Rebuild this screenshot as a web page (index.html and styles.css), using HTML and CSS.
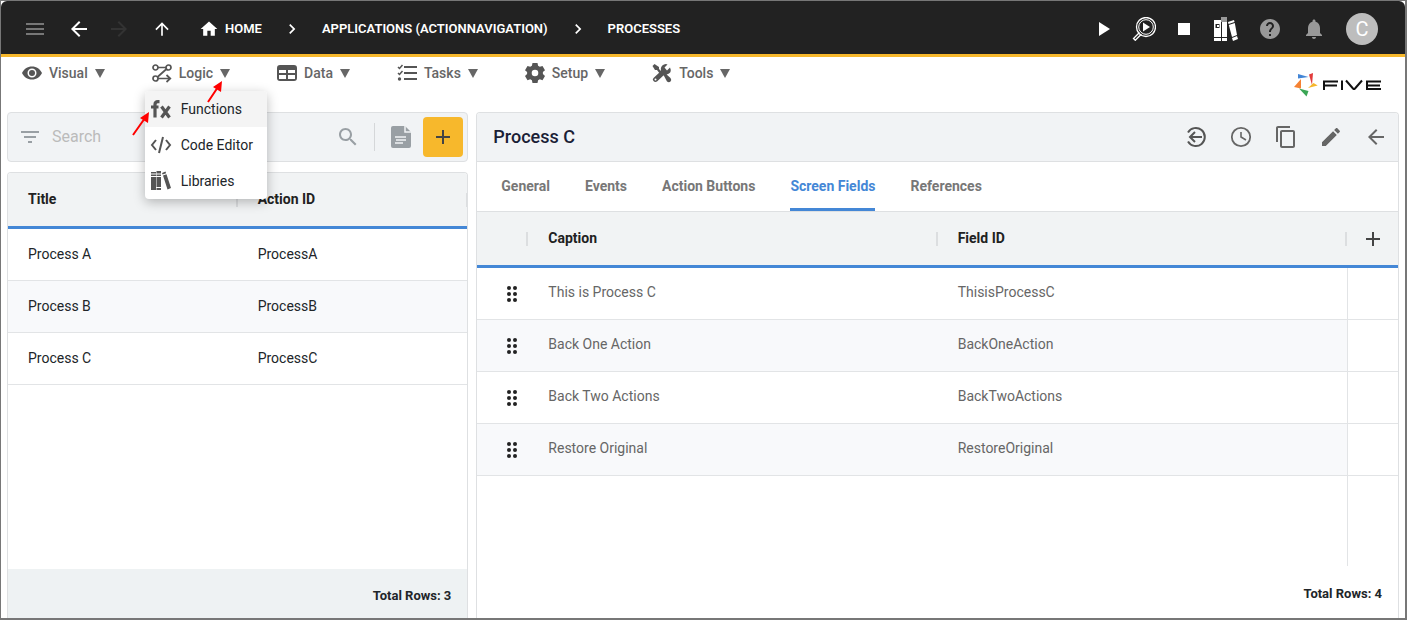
FILE: index.html
```html
<!DOCTYPE html>
<html lang="en">
<head>
<meta charset="utf-8">
<title>Processes</title>
<link rel="stylesheet" href="styles.css">
</head>
<body>
<svg class="sprite" aria-hidden="true">
  <symbol id="back" viewBox="0 0 24 24"><path d="M20 11H7.830l5.590-5.590L12 4l-8 8 8 8 1.410-1.410L7.830 13H20v-2z"/></symbol>
  <symbol id="up" viewBox="0 0 24 24"><path d="M4 12l1.410 1.410L11 7.830V20h2V7.830l5.580 5.590L20 12l-8-8-8 8z"/></symbol>
  <symbol id="chevron" viewBox="0 0 24 24"><path d="M10 6L8.590 7.410 13.170 12l-4.580 4.590L10 18l6-6z"/></symbol>
  <symbol id="plus" viewBox="0 0 24 24"><path d="M19 13h-6v6h-2v-6H5v-2h6V5h2v6h6v2z"/></symbol>
  <symbol id="books" viewBox="0 0 22 22"><path d="M1 2h5v1.500H1zM1 4.500h5V6H1zM1 7h5v13H1zM6.500 1h4.500v2.500H6.500zM6.500 4.500H11V6H6.500zM6.500 7H11v10H6.500zM6.500 18H11v2H6.500zM12 3l3.500-1.500.6 1.700-3.500 1.300zM13 5.500l3.500-1.300L21 18l-3.500 1.500z"/></symbol>
  <symbol id="grip" viewBox="0 0 12 18"><circle cx="3" cy="3" r="2"/><circle cx="9" cy="3" r="2"/><circle cx="3" cy="9" r="2"/><circle cx="9" cy="9" r="2"/><circle cx="3" cy="15" r="2"/><circle cx="9" cy="15" r="2"/></symbol>
</svg>
<div class="app">
  <header class="topbar">
    <button class="icon-btn hamburger" aria-label="Menu"><svg class="i20" viewBox="0 0 20 20"><path d="M1 4h18v2H1zM1 9h18v2H1zM1 14h18v2H1z"/></svg></button>
    <button class="icon-btn nav-back" aria-label="Back"><svg class="i24"><use href="#back"/></svg></button>
    <button class="icon-btn nav-forward" aria-label="Forward" disabled><svg class="i24"><use href="#back"/></svg></button>
    <button class="icon-btn nav-up" aria-label="Up"><svg class="i20"><use href="#up"/></svg></button>
    <nav class="crumbs" aria-label="Breadcrumb">
      <a href="#home"><svg class="i20" viewBox="0 0 24 24"><path d="M10 20v-6h4v6h5v-8h3L12 3 2 12h3v8z"/></svg>HOME</a>
      <svg class="i20"><use href="#chevron"/></svg>
      <a href="#app">APPLICATIONS (ACTIONNAVIGATION)</a>
      <svg class="i20"><use href="#chevron"/></svg>
      <a href="#processes">PROCESSES</a>
    </nav>
    <div class="top-actions">
      <div class="run-actions">
        <button class="icon-btn" aria-label="Run"><svg class="i24" viewBox="0 0 24 24"><path d="M7 5v14l11-7z"/></svg></button>
        <button class="icon-btn" aria-label="Inspect"><svg class="i24" viewBox="0 0 24 24"><g fill="none" stroke="#fff"><circle cx="14" cy="10" r="9.500" stroke-width="1.300"/><circle cx="14" cy="10" r="7.300" stroke-width="1"/><path d="M7.500 15.500l-6 6 1.800 1.800 6-6" stroke-width="1.300"/></g><path d="M11 5.500v9l7-4.500z"/></svg></button>
        <button class="icon-btn" aria-label="Stop"><svg class="i24" viewBox="0 0 24 24"><path d="M6 6h12v12H6z"/></svg></button>
      </div>
      <button class="icon-btn" aria-label="Libraries"><svg class="i24" viewBox="0 0 24 24"><path d="M0 3h7v17H0zM0 21h7v3H0zM8 5h5v15H8zM8 21h5v3H8zM14 5l6-2 .5 2-6 2zM14.800 8l6-2L23 18l-5 2zM18 21l5-2 1 3-5 2z"/><path d="M1.500 7h4v4h-4z" fill="#222"/><path d="M3 8h2v2H3z"/><path d="M7 0h6v5H7z" fill="#999"/></svg></button>
      <button class="icon-btn dim" aria-label="Help"><svg class="i24" viewBox="0 0 24 24"><path d="M12 2C6.480 2 2 6.480 2 12s4.480 10 10 10 10-4.480 10-10S17.520 2 12 2zm1 17h-2v-2h2v2zm2.070-7.750l-.9.920C13.450 12.900 13 13.500 13 15h-2v-.5c0-1.100.450-2.100 1.170-2.830l1.240-1.260c.370-.360.590-.860.590-1.410 0-1.100-.9-2-2-2s-2 .9-2 2H8c0-2.210 1.790-4 4-4s4 1.790 4 4c0 .880-.360 1.680-.930 2.250z"/></svg></button>
      <button class="icon-btn dim" aria-label="Notifications"><svg class="i24" viewBox="0 0 24 24"><path d="M12 22c1.100 0 2-.9 2-2h-4c0 1.100.890 2 2 2zm6-6v-5c0-3.070-1.640-5.640-4.500-6.320V4c0-.830-.670-1.500-1.500-1.500s-1.500.670-1.500 1.500v.680C7.630 5.360 6 7.920 6 11v5l-2 2v1h16v-1l-2-2z"/></svg></button>
      <button class="avatar" aria-label="Account">C</button>
    </div>
  </header>

  <div class="menubar">
    <ul class="menus">
      <li><button class="menu-btn"><svg class="i20" viewBox="0 0 20 20"><path fill-rule="evenodd" d="M10 3.500C5.500 3.500 1.600 6.200 0 10c1.600 3.800 5.500 6.500 10 6.500s8.400-2.700 10-6.500c-1.600-3.800-5.500-6.500-10-6.500zm0 11a4.500 4.500 0 1 1 0-9 4.500 4.500 0 0 1 0 9z"/><circle cx="10" cy="10" r="3"/></svg>Visual<span class="caret"></span></button></li>
      <li><button class="menu-btn" aria-expanded="true"><svg class="i20" viewBox="0 0 20 20"><g fill="none" stroke="#555" stroke-width="1.700"><circle cx="3.500" cy="4.500" r="2.500"/><circle cx="16.500" cy="4.500" r="2.500"/><circle cx="3.500" cy="15.500" r="2.500"/><path d="M6 4.500h8M14.500 6L5.500 14M6 15.500h12M14.500 12l3.800 3.500-3.800 3.500"/></g></svg>Logic<span class="caret"></span></button>
        <div class="dropdown" role="menu">
          <button class="drop-item active" role="menuitem"><svg class="i22" viewBox="0 0 22 22"><path fill="none" stroke="#555" stroke-width="3.200" d="M9.500 3.600H8Q5 3.600 5 6.500V19.500M1 9h7.500M11.500 8.500l8 11M19.500 8.500l-8 11"/></svg>Functions</button>
          <button class="drop-item" role="menuitem"><svg class="i22" viewBox="0 0 22 22"><path fill="none" stroke="#555" stroke-width="2" d="M6 6l-4 5 4 5M16 6l4 5-4 5M13 3L9 19"/></svg>Code Editor</button>
          <button class="drop-item" role="menuitem"><svg class="i22"><use href="#books"/></svg>Libraries</button>
        </div>
        <svg class="pointers" viewBox="0 0 96 60" aria-hidden="true"><path d="M76 21L86 6M1 54L13 37" stroke="#f00" stroke-width="2"/><path d="M90 0l-1 11-8-5zM17 31l-1 11-8-5z" fill="#f00"/></svg>
      </li>
      <li><button class="menu-btn"><svg class="i20" viewBox="0 0 20 20"><path fill-rule="evenodd" d="M3 2h14q3 0 3 3v10q0 3-3 3H3q-3 0-3-3V5q0-3 3-3zM2 7v3h7V7zm9 0v3h7V7zm-9 5v4h7v-4zm9 0v4h7v-4z"/></svg>Data<span class="caret"></span></button></li>
      <li><button class="menu-btn"><svg class="i20" viewBox="0 0 20 20"><path d="M7 3h13v2H7zM7 9h13v2H7zM7 15h13v2H7z"/><circle cx="2.500" cy="16" r="1.700"/><path d="M1 4l1.500 1.500L5.500 2M1 10l1.500 1.500L5.500 8" fill="none" stroke="#555" stroke-width="1.500"/></svg>Tasks<span class="caret"></span></button></li>
      <li><button class="menu-btn"><svg class="i20" viewBox="0 0 20 20"><path fill-rule="evenodd" d="M7.500 0h5l.6 2.800 1.700 1 2.700-.9 2.500 4.300-2.100 1.900v1.900l2.100 1.900-2.500 4.300-2.700-.9-1.700 1-.6 2.700h-5l-.6-2.700-1.700-1-2.700.9L0 12.900 2.100 11V9.100L0 7.200l2.500-4.300 2.700.9 1.700-1zM10 6.700a3.300 3.300 0 1 0 0 6.600 3.300 3.300 0 0 0 0-6.600z"/></svg>Setup<span class="caret"></span></button></li>
      <li><button class="menu-btn"><svg class="i20" viewBox="0 0 20 20"><path d="M.5 3l2-2L7 4v2l3 3-2 2-3-4H3zM11.500 12l2-1.500 5 4.500q1.500 2 0 3.500t-3.500 0zM1.500 15l7.500-7q-1-5 3-6.500 2-1 3.500 0l-3 3 2.500 3 3-3q2 4-1 6-2 1.500-4.500 1l-7.500 7q-2 1-3.500-.5t0-3z"/><circle cx="3.500" cy="16.500" r="1" fill="#fff"/></svg>Tools<span class="caret"></span></button></li>
    </ul>
    <svg class="brand" viewBox="0 0 88 26" role="img" aria-label="FIVE"><path fill="#4285d6" d="M4 2l10.500 3L4 6.500z"/><path fill="#e23b3b" d="M15 2.500l4-1.500-1 12z"/><path fill="#f5b62b" d="M14 16l5.500-5 4.200 2.500z"/><path fill="#3aa655" d="M5 16.500l9.500 2.500-2 5.500z"/><path fill="#f58233" d="M7 7v9.500L0 15z"/><g fill="none" stroke="#111" stroke-width="2"><path d="M30 18V9.500h14M30 13.500h13M48 8.500V18M52 8.500l7 8q1 1 2 0l7-8M87 9.500H73V17h14M73 13.500h13"/></g></svg>
  </div>

  <main class="panes">
    <section class="list-pane">
      <div class="search">
        <svg class="i20 muted" viewBox="0 0 20 20"><path d="M1 4h18v2H1zM4 9h12v2H4zM8 14h4v2H8z"/></svg>
        <input type="text" placeholder="Search" aria-label="Search">
        <button class="icon-btn muted" aria-label="Find"><svg class="i24" viewBox="0 0 24 24"><path d="M15.500 14h-.790l-.280-.270C15.410 12.590 16 11.110 16 9.500 16 5.910 13.090 3 9.500 3S3 5.910 3 9.500 5.910 16 9.500 16c1.610 0 3.090-.590 4.230-1.570l.270.280v.790l5 4.990L20.490 19l-4.990-5zm-6 0C7.010 14 5 11.990 5 9.500S7.010 5 9.500 5 14 7.010 14 9.500 11.990 14 9.500 14z"/></svg></button>
        <span class="divider"></span>
        <button class="icon-btn muted" aria-label="Report"><svg class="i24" viewBox="0 0 24 24"><path d="M4 1h12l6 6v14q0 2-2 2H4q-2 0-2-2V3q0-2 2-2z"/><path d="M16 1v6h6" fill="none" stroke="#f1f3f5" stroke-width="1.500"/><path d="M6 12h11M7 15h10M6 18h8" stroke="#f1f3f5" stroke-width="1.300"/></svg></button>
        <button class="add" aria-label="Add"><svg class="i24"><use href="#plus"/></svg></button>
      </div>
      <div class="card">
        <table class="grid list">
          <thead><tr><th>Title</th><th>Action ID</th></tr></thead>
          <tbody>
            <tr><td>Process A</td><td>ProcessA</td></tr>
            <tr><td>Process B</td><td>ProcessB</td></tr>
            <tr><td>Process C</td><td>ProcessC</td></tr>
          </tbody>
        </table>
        <footer class="total shaded">Total Rows: 3</footer>
      </div>
    </section>

    <section class="card detail">
      <header class="detail-head">
        <h1>Process C</h1>
        <button class="icon-btn" aria-label="Revert"><svg class="i24" viewBox="0 0 24 24"><path d="M4 7.500a9 9 0 1 1 0 9M18 12H6M11 7l-5 5 5 5" fill="none" stroke="#555" stroke-width="2"/></svg></button>
        <button class="icon-btn" aria-label="History"><svg class="i24" viewBox="0 0 24 24"><path d="M12 7v5l5 3" fill="none" stroke="#666" stroke-width="1.600"/><circle cx="12" cy="12" r="9.200" fill="none" stroke="#666" stroke-width="1.800"/></svg></button>
        <button class="icon-btn" aria-label="Copy"><svg class="i24" viewBox="0 0 24 24"><path d="M16 1H4c-1.100 0-2 .9-2 2v14h2V3h12V1zm3 4H8c-1.100 0-2 .9-2 2v14c0 1.100.9 2 2 2h11c1.100 0 2-.9 2-2V7c0-1.100-.9-2-2-2zm0 16H8V7h11v14z"/></svg></button>
        <button class="icon-btn" aria-label="Edit"><svg class="i24" viewBox="0 0 24 24"><path d="M3 17.250V21h3.750L17.810 9.940l-3.750-3.750L3 17.250zM20.710 7.040c.390-.390.390-1.020 0-1.410l-2.340-2.340c-.390-.390-1.020-.390-1.410 0l-1.830 1.830 3.750 3.750 1.830-1.830z"/></svg></button>
        <button class="icon-btn" aria-label="Close"><svg class="i24"><use href="#back"/></svg></button>
      </header>
      <nav class="tabs">
        <a href="#general">General</a><a href="#events">Events</a><a href="#buttons">Action Buttons</a><a class="current" href="#fields">Screen Fields</a><a href="#references">References</a>
      </nav>
      <div class="detail-body">
      <table class="grid fields">
        <colgroup><col class="c-grip"><col><col><col class="c-add"></colgroup>
        <thead><tr><th></th><th>Caption</th><th>Field ID</th><th><button class="icon-btn" aria-label="Add field"><svg class="i24"><use href="#plus"/></svg></button></th></tr></thead>
        <tbody>
          <tr><td><svg class="grip"><use href="#grip"/></svg></td><td>This is Process C</td><td>ThisisProcessC</td><td></td></tr>
          <tr><td><svg class="grip"><use href="#grip"/></svg></td><td>Back One Action</td><td>BackOneAction</td><td></td></tr>
          <tr><td><svg class="grip"><use href="#grip"/></svg></td><td>Back Two Actions</td><td>BackTwoActions</td><td></td></tr>
          <tr><td><svg class="grip"><use href="#grip"/></svg></td><td>Restore Original</td><td>RestoreOriginal</td><td></td></tr>
        </tbody>
      </table>
      <div class="rail"></div>
      </div>
      <footer class="total">Total Rows: 4</footer>
    </section>
  </main>
</div>
</body>
</html>
```
FILE: styles.css
```css
* { box-sizing: border-box; }
body { margin: 0; background: #fff; color: #212529; font: 14px/20px Roboto, sans-serif; }
button { border: 0; padding: 0; background: none; font: inherit; color: inherit; cursor: pointer; }
a { color: inherit; text-decoration: none; }
svg { display: block; flex: none; fill: currentColor; }
.sprite { position: absolute; width: 0; height: 0; }
.i20 { width: 20px; height: 20px; }
.i22 { width: 22px; height: 22px; }
.i24 { width: 24px; height: 24px; }
.icon-btn { display: flex; align-items: center; justify-content: center; flex: none; }

.app { display: flex; flex-direction: column; height: 100vh; border: solid #777; border-width: 1px 2px 2px 1px; overflow: hidden; }

.topbar { display: flex; align-items: center; height: 56px; flex: none; padding: 2px 27px 0 24px; background: #222; border-bottom: 3px solid #f7b82c; border-radius: 6px 6px 0 0; color: #fff; }
.hamburger { color: #777; }
.nav-back { margin-left: 22px; }
.nav-forward { margin-left: 16px; color: #333; }
.nav-forward svg { transform: rotate(180deg); }
.nav-up { margin-left: 21px; }
.crumbs { display: flex; align-items: center; gap: 20px; margin-left: 27px; font-size: 13px; font-weight: 600; }
.crumbs a { display: flex; align-items: center; gap: 6px; }
.top-actions { display: flex; align-items: center; gap: 20px; margin-left: auto; }
.run-actions { display: flex; gap: 16px; margin-right: -2px; }
.dim { color: #999; }
.avatar { width: 32px; height: 32px; border-radius: 50%; background: #bdbdbd; color: #fff; font-size: 20px; }

.menubar { display: flex; justify-content: space-between; height: 55px; flex: none; padding: 6px 23px 0 21px; }
.menus { display: flex; gap: 47px; margin: 0; padding: 0; list-style: none; }
.menus li { position: relative; }
.menu-btn { display: flex; align-items: center; gap: 7px; color: #666; font-weight: 500; }
.menu-btn svg { color: #555; }
.caret { border: solid transparent; border-width: 9px 5px 0; border-top-color: #666; }
.dropdown { position: absolute; z-index: 2; top: 28px; left: -7px; width: 122px; background: #fff; border-radius: 4px; box-shadow: 0 3px 12px #0004; overflow: hidden; }
.drop-item { display: flex; align-items: center; gap: 9px; width: 100%; height: 36px; padding-left: 5px; white-space: nowrap; }
.drop-item svg { color: #555; }
.drop-item.active { background: #f4f4f4; }
.pointers { position: absolute; z-index: 3; top: 18px; left: -20px; width: 96px; height: 60px; pointer-events: none; }
.brand { width: 88px; height: 26px; margin-top: 9px; }

.panes { display: grid; grid-template-columns: 1fr 2fr; gap: 8px; flex: 1; min-height: 0; padding: 0 6px; }
.list-pane { display: flex; flex-direction: column; gap: 10px; min-width: 0; min-height: 0; }
.search { display: flex; align-items: center; height: 50px; flex: none; padding: 0 4px 0 12px; background: #f1f3f5; border: 1px solid #dee0e2; border-radius: 4px; }
.search input { flex: 1; min-width: 0; margin-left: 12px; padding: 0; border: 0; outline: 0; background: none; font: 16px/20px Roboto, sans-serif; }
.search input::placeholder { color: #bbb; }
.muted { color: #999fa4; }
.divider { width: 1px; height: 28px; margin: 0 14px; background: #d5d7d9; }
.add { display: grid; place-items: center; width: 40px; height: 40px; margin-left: 10px; border-radius: 4px; background: #f7b82c; color: #444; }

.card { display: flex; flex-direction: column; flex: 1; min-width: 0; min-height: 0; border: 1px solid #dee0e2; border-bottom: 0; border-radius: 4px 4px 0 0; overflow: hidden; }
.grid { width: 100%; border-collapse: separate; border-spacing: 0; table-layout: fixed; }
.grid th { position: relative; height: 56px; padding: 0 20px 2px; background: #f1f3f4; border-bottom: 3px solid #4487d6; text-align: left; font-weight: 700; color: #212121; }
.grid th:not(:last-child)::after { content: ""; position: absolute; right: 0; top: 20px; width: 2px; height: 14px; background: #dcdee0; }
.list th:last-child::after { content: ""; position: absolute; right: 0; top: 20px; width: 1px; height: 14px; background: #dcdee0; }
.grid td { height: 52px; padding: 0 20px 2px; border-bottom: 1px solid #e2e4e6; }
.grid tbody tr:nth-child(even) { background: #f8f9fb; }
.total { margin-top: auto; padding: 18px 16px 14px; text-align: right; font-size: 13px; font-weight: 700; }
.total.shaded { padding: 17px 16px 12px; background: #eef2f3; }

.detail-head { display: flex; align-items: center; gap: 21px; height: 49px; flex: none; padding: 0 10px 0 16px; background: #f1f3f5; border-bottom: 1px solid #dee0e2; color: #666; }
.detail-head h1 { flex: 1; margin: 0; font-size: 18px; font-weight: 500; color: #1a2035; }
.tabs { display: flex; gap: 35px; height: 50px; flex: none; padding: 0 24px; border-bottom: 1px solid #dee0e2; color: #777; font-weight: 700; line-height: 49px; }
.tabs .current { color: #4487d6; box-shadow: inset 0 -3px #4487d6; }
.detail-body { display: flex; flex-direction: column; flex: 1; min-height: 0; }
.c-grip { width: 51px; }
.c-add { width: 51px; }
.fields td { padding-bottom: 4px; color: #666; }
.fields tbody td:first-child { padding: 0 0 0 29px; color: #222; }
.fields th:last-child { padding: 0 0 0 14px; color: #444; }
.fields td:last-child { background: #fff; border-left: 1px solid #e2e4e6; }
.grip { width: 12px; height: 18px; }
.rail { flex: 1; width: 51px; margin-left: auto; border-left: 1px solid #e2e4e6; }
```
